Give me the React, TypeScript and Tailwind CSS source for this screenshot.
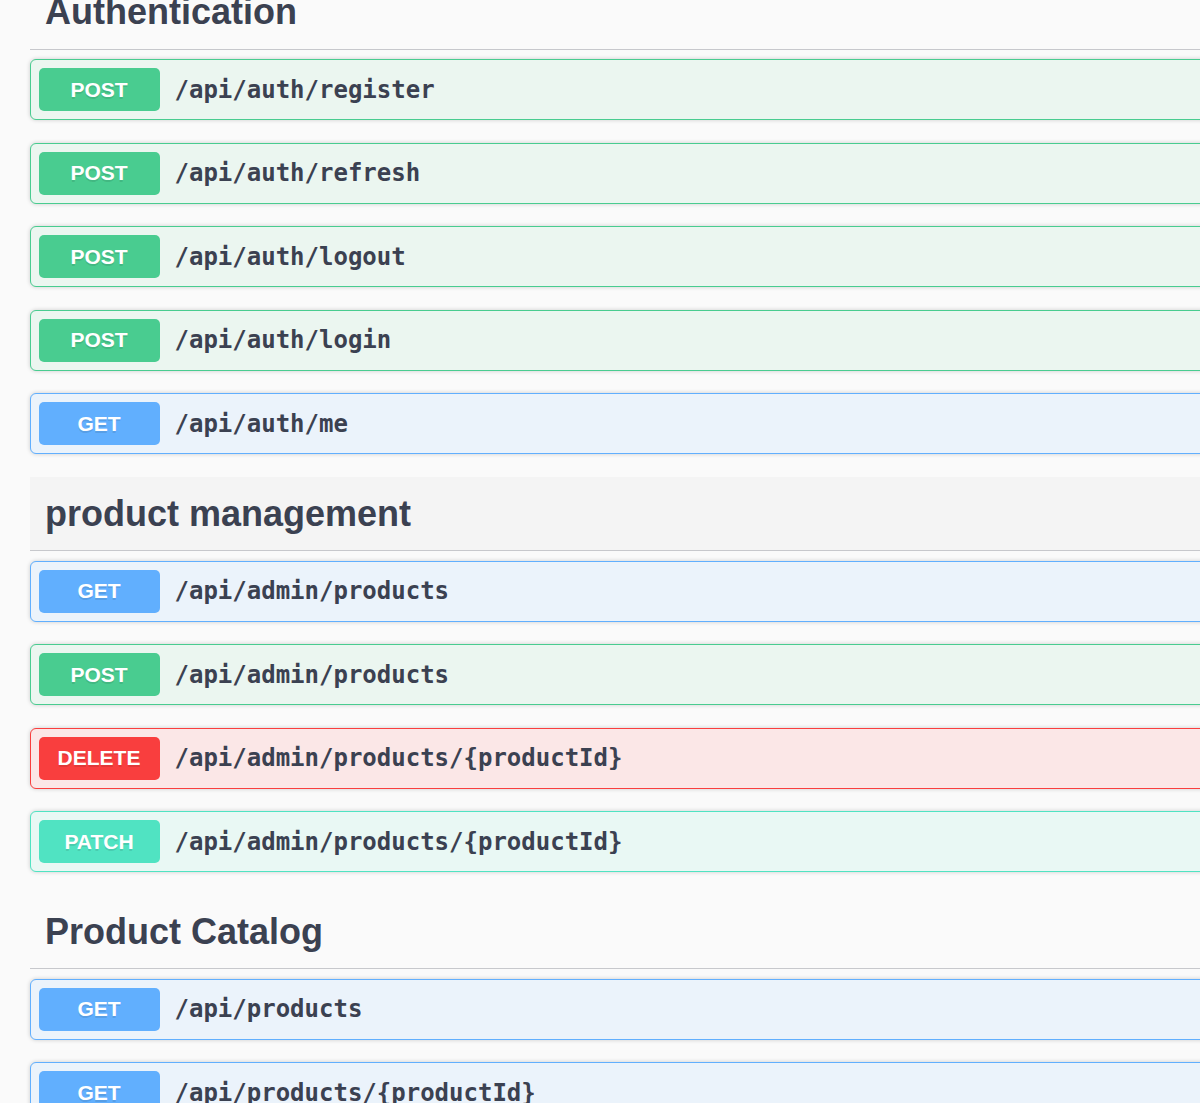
import React from 'react'

type Method = 'GET' | 'POST' | 'DELETE' | 'PATCH'

const METHOD_STYLES: Record<Method, { row: string; badge: string }> = {
  GET: { row: 'border-[#61affe] bg-[#ebf3fb]', badge: 'bg-[#61affe]' },
  POST: { row: 'border-[#49cc90] bg-[#ebf6f0]', badge: 'bg-[#49cc90]' },
  DELETE: { row: 'border-[#f93e3e] bg-[#fbe7e7]', badge: 'bg-[#f93e3e]' },
  PATCH: { row: 'border-[#50e3c2] bg-[#e9f8f4]', badge: 'bg-[#50e3c2]' },
}

const SECTIONS: { name: string; hover?: boolean; ops: { method: Method; path: string }[] }[] = [
  {
    name: 'Authentication',
    ops: [
      { method: 'POST', path: '/api/auth/register' },
      { method: 'POST', path: '/api/auth/refresh' },
      { method: 'POST', path: '/api/auth/logout' },
      { method: 'POST', path: '/api/auth/login' },
      { method: 'GET', path: '/api/auth/me' },
    ],
  },
  {
    name: 'product management',
    hover: true,
    ops: [
      { method: 'GET', path: '/api/admin/products' },
      { method: 'POST', path: '/api/admin/products' },
      { method: 'DELETE', path: '/api/admin/products/{productId}' },
      { method: 'PATCH', path: '/api/admin/products/{productId}' },
    ],
  },
  {
    name: 'Product Catalog',
    ops: [
      { method: 'GET', path: '/api/products' },
      { method: 'GET', path: '/api/products/{productId}' },
    ],
  },
]

function OpRow({ method, path }: { method: Method; path: string }) {
  const s = METHOD_STYLES[method]
  return (
    <div
      className={`h-[61px] mb-[22.5px] border-[1.5px] rounded-[6px] shadow-[0_0_4.5px_rgba(0,0,0,0.19)] flex items-center px-[7.5px] ${s.row}`}
    >
      <span
        className={`w-[121px] h-[43px] shrink-0 rounded-[5px] flex items-center justify-center text-white font-bold text-[21px] [text-shadow:0_1.5px_0_rgba(0,0,0,0.1)] ${s.badge}`}
        style={{ fontFamily: '"Liberation Sans", Arial, sans-serif' }}
      >
        {method}
      </span>
      <span
        className="pl-[15px] text-[24px] font-bold text-[#3b4151]"
        style={{ fontFamily: '"DejaVu Sans Mono", monospace' }}
      >
        {path}
      </span>
    </div>
  )
}

export default function App() {
  return (
    <div className="w-full h-[1103px] overflow-hidden bg-[#fafafa]">
      <div className="w-[1320px] ml-[30px] mt-[-25px]">
        {SECTIONS.map(sec => (
          <section key={sec.name}>
            <h3
              className={`h-[74.5px] mb-[9.5px] pl-[15px] flex items-center border-b-[1.5px] border-[#c7c8cc] text-[36px] font-bold text-[#3b4151] leading-[43px] ${sec.hover ? 'bg-[#f4f4f4]' : ''}`}
              style={{ fontFamily: '"Liberation Sans", Arial, sans-serif' }}
            >
              {sec.name}
            </h3>
            {sec.ops.map((op, i) => (
              <OpRow key={i} method={op.method} path={op.path} />
            ))}
          </section>
        ))}
      </div>
    </div>
  )
}
